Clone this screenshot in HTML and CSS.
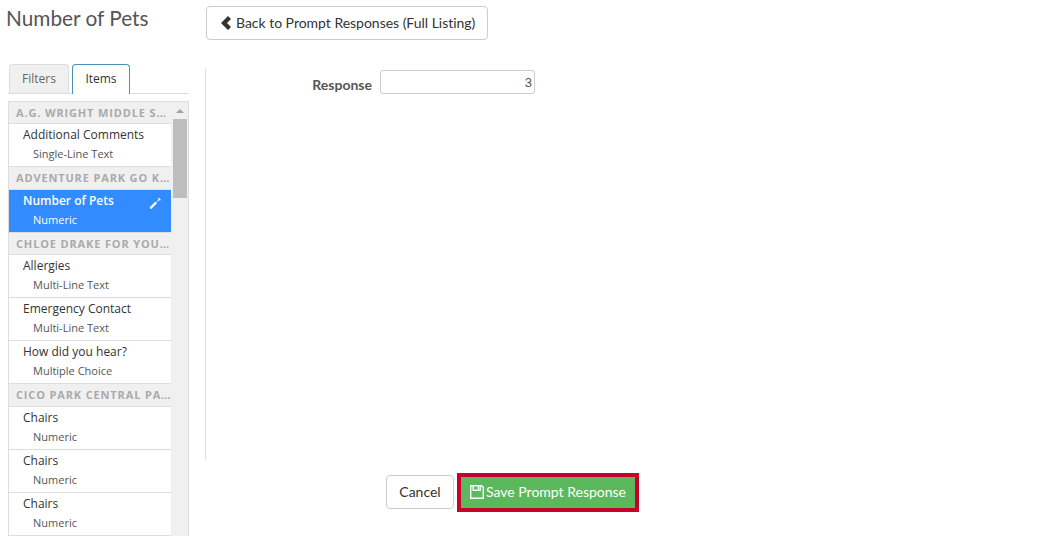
FILE: index.html
```html
<!DOCTYPE html>
<html lang="en">

<head>
    <meta charset="UTF-8">
    <title>Number of Pets</title>
    <link rel="stylesheet" href="styles.css">
</head>

<body>
    <div class="page">
        <aside class="sidebar">
            <h1>Number of Pets</h1>
            <div class="tabs">
                <a class="tab">Filters</a>
                <a class="tab active">Items</a>
            </div>
            <div class="list-box">
                <div class="list">
                    <div class="group">A.G. Wright Middle S…</div>
                    <div class="item">
                        <div class="item-name">Additional Comments</div>
                        <div class="item-type">Single-Line Text</div>
                    </div>
                    <div class="group">Adventure Park Go K…</div>
                    <div class="item selected">
                        <div class="item-name">Number of Pets</div>
                        <div class="item-type">Numeric</div>
                        <svg class="edit-icon" viewBox="0 0 12 12" width="12" height="12">
                            <path d="M1 11.5L.6 10.4 6.4 4.6l1.6 1.6-5.8 5.8z" fill="#fff" />
                            <path d="M7.6 4.4L9.6 2.4 8.9 1.7 9.9.7l2 2-1 1-.7-.7-2 2z" fill="#fff" />
                        </svg>
                    </div>
                    <div class="group">Chloe Drake for You…</div>
                    <div class="item">
                        <div class="item-name">Allergies</div>
                        <div class="item-type">Multi-Line Text</div>
                    </div>
                    <div class="item">
                        <div class="item-name">Emergency Contact</div>
                        <div class="item-type">Multi-Line Text</div>
                    </div>
                    <div class="item">
                        <div class="item-name">How did you hear?</div>
                        <div class="item-type">Multiple Choice</div>
                    </div>
                    <div class="group">Cico Park Central Pa…</div>
                    <div class="item">
                        <div class="item-name">Chairs</div>
                        <div class="item-type">Numeric</div>
                    </div>
                    <div class="item">
                        <div class="item-name">Chairs</div>
                        <div class="item-type">Numeric</div>
                    </div>
                    <div class="item">
                        <div class="item-name">Chairs</div>
                        <div class="item-type">Numeric</div>
                    </div>
                </div>
                <div class="scrollbar">
                    <div class="scroll-arrow"></div>
                    <div class="scroll-thumb"></div>
                </div>
            </div>
        </aside>

        <main class="main">
            <button class="btn back-btn">
                <svg class="back-icon" viewBox="0 0 11 14" width="11" height="14">
                    <path d="M7 0l3 3-4 4 4 4-3 3-7-7z" fill="#333" />
                </svg>
                <span>Back to Prompt Responses (Full Listing)</span>
            </button>
            <div class="form-panel">
                <div class="field">
                    <label class="field-label">Response</label>
                    <input class="field-input" type="text" value="3">
                </div>
            </div>
            <div class="actions">
                <button class="btn">Cancel</button>
                <button class="save-btn">
                    <svg viewBox="0 0 14 14" width="14" height="14">
                        <path d="M.7.7h10.8l1.8 1.8v10.8H.7z" fill="none" stroke="#fff" stroke-width="1.4" />
                        <path d="M3.2 1v4.2h7V1" fill="none" stroke="#fff" stroke-width="1.4" />
                        <path d="M7.6 1.6h1.4v2.4H7.6z" fill="#fff" />
                    </svg>
                    <span>Save Prompt Response</span>
                </button>
            </div>
        </main>
    </div>
</body>

</html>
```

FILE: styles.css
```css
* {
    padding: 0;
    margin: 0;
    box-sizing: border-box;
}

html,
body {
    height: 536px;
    overflow: hidden;
    background-color: #fff;
}

body {
    font-family: Lato, sans-serif;
    font-size: 14px;
    color: #333;
}

.page {
    display: flex;
    height: 536px;
    overflow: hidden;
}

.sidebar {
    width: 181px;
    margin-left: 8px;
    flex-shrink: 0;
}

h1 {
    font-size: 20.8px;
    font-weight: 400;
    line-height: 24px;
    color: #555;
    margin-left: -2px;
    margin-top: 6px;
}

.tabs {
    display: flex;
    gap: 3px;
    height: 30px;
    margin-top: 34px;
    padding-left: 1px;
    border-bottom: 1px solid #ddd;
}

.tab {
    height: 29px;
    width: 60px;
    text-align: center;
    line-height: 28px;
    font-family: "Open Sans", sans-serif;
    font-size: 12px;
    color: #666;
    background-color: #f0f0f0;
    border: 1px solid #ddd;
    border-bottom: none;
    border-radius: 4px 4px 0 0;
}

.tab.active {
    width: 58px;
    height: 30px;
    color: #333;
    background-color: #fff;
    border-color: #4a90b8;
    border-bottom: none;
}

.list-box {
    display: flex;
    height: 435px;
    margin-top: 7px;
    border: 1px solid #ddd;
    border-bottom: none;
    overflow: hidden;
}

.list {
    width: 162px;
    font-family: "Open Sans", sans-serif;
}

.group {
    height: 22.4px;
    padding-left: 7px;
    line-height: 21px;
    font-size: 11px;
    font-weight: 700;
    letter-spacing: 0.85px;
    text-transform: uppercase;
    color: #aaa;
    background-color: #f0f0f0;
    border-bottom: 1px solid #ddd;
    white-space: nowrap;
}

.item {
    position: relative;
    height: 43px;
    padding: 1px 14px 0;
    border-bottom: 1px solid #ddd;
    background-color: #fff;
}

.item-name {
    font-size: 12px;
    line-height: 19px;
    color: #333;
}

.item-type {
    font-size: 11px;
    line-height: 19px;
    padding-left: 10px;
    color: #555;
}

.item.selected {
    background-color: #338cff;
}

.item.selected .item-name {
    font-weight: 600;
    color: #fff;
}

.item.selected .item-type {
    color: #fff;
}

.edit-icon {
    position: absolute;
    top: 7px;
    right: 10px;
}

.scrollbar {
    width: 17px;
    background-color: #f0f0f0;
}

.scroll-arrow {
    width: 0;
    height: 0;
    margin: 7px auto 6px;
    border-left: 4px solid transparent;
    border-right: 4px solid transparent;
    border-bottom: 4px solid #a3a3a3;
}

.scroll-thumb {
    width: 14px;
    height: 79px;
    margin-left: 2px;
    background-color: #bdbdbd;
}

.main {
    margin-left: 16px;
    flex: 1;
}

.btn {
    height: 34px;
    padding: 0 12px 2px;
    font-family: Lato, sans-serif;
    font-size: 14px;
    color: #333;
    background-color: #fff;
    border: 1px solid #ccc;
    border-radius: 4px;
}

.back-btn {
    display: flex;
    align-items: center;
    gap: 4px;
    margin: 6px 0 0 1px;
    width: 282px;
    padding: 0 14px 0;
    white-space: nowrap;
}

.back-btn span {
    margin-bottom: 2px;
    letter-spacing: -0.02px;
}

.back-icon {
    flex-shrink: 0;
}

.form-panel {
    height: 391px;
    margin-top: 29px;
    border-left: 1px solid #ddd;
    padding-top: 1px;
}

.field {
    display: flex;
    gap: 8px;
}

.field-label {
    width: 166px;
    padding-top: 6px;
    text-align: right;
    font-weight: 700;
    color: #555;
}

.field-input {
    width: 155px;
    height: 24px;
    padding: 0 2px 0 3px;
    text-align: right;
    font-family: "Liberation Sans", sans-serif;
    font-size: 13px;
    color: #555;
    border: 1px solid #ccc;
    border-radius: 3px;
}

.actions {
    display: flex;
    align-items: flex-start;
    gap: 3px;
    margin: 13px 0 0 181px;
}

.actions .btn {
    width: 68px;
    margin-top: 2px;
}

.save-btn {
    display: flex;
    align-items: center;
    justify-content: center;
    gap: 2px;
    width: 182px;
    height: 39px;
    padding-bottom: 2px;
    font-family: Lato, sans-serif;
    font-size: 14px;
    color: #fff;
    background-color: #5cb85c;
    border: 4px solid #c8002d;
}

.save-btn span {
    margin-bottom: 1px;
}
```
